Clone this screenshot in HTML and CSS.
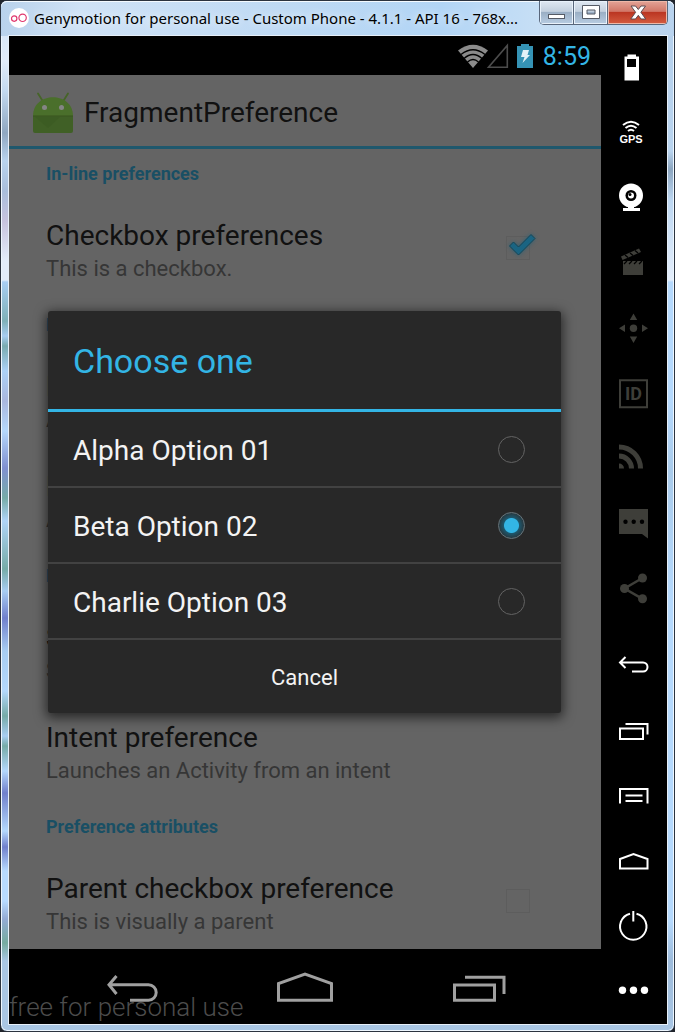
FILE: index.html
```html
<!DOCTYPE html>
<html lang="en">
<head>
<meta charset="utf-8">
<meta name="viewport" content="width=device-width, initial-scale=1">
<title>Genymotion for personal use</title>
<link rel="stylesheet" href="styles.css">
</head>
<body>
<div class="window">
  <header class="titlebar">
    <svg class="logo" viewBox="0 0 20 20" aria-hidden="true"><circle cx="10" cy="10" r="10" fill="#fff"/><g fill="none" stroke="#e0386e" stroke-width="1.2"><circle cx="5.2" cy="10.6" r="2.7"/><circle cx="13.6" cy="9.8" r="3.7"/></g></svg>
    <span class="window-title">Genymotion for personal use - Custom Phone - 4.1.1 - API 16 - 768x...</span>
    <div class="window-controls">
      <button class="win-btn" aria-label="Minimize"><svg viewBox="0 0 24 20"><rect x="3.5" y="11.5" width="16" height="4" fill="#fff" stroke="#555b66"/></svg></button>
      <button class="win-btn" aria-label="Maximize"><svg viewBox="0 0 24 20"><path d="M3.500 2.500h17v13h-17z M8 7v4h8V7z" fill="#fff" fill-rule="evenodd" stroke="#555b66"/></svg></button>
      <button class="win-btn close" aria-label="Close"><svg viewBox="0 0 24 20"><path d="M5 3h4.500l2.800 3.500L15 3h4.500l-4.600 6.300L19.700 16H15l-2.700-3.700L9.500 16H4.800l4.800-6.700z" fill="#fff" stroke="#5c4a50"/></svg></button>
    </div>
  </header>

  <div class="emulator">
    <main class="phone">
      <div class="status">
        <svg class="status-wifi" viewBox="0 0 52 26" aria-hidden="true">
          <path d="M1 7.500Q16 -4 31 7.500L16 25z" fill="#8b8b8b"/>
          <g fill="none" stroke="#000" stroke-width="1.300"><path d="M4 11.500Q16 2 28 11.500M7 15.500Q16 7.500 25 15.500M10.500 19Q16 14 21.500 19"/></g>
          <path d="M50.300 2.500V24.300H31.500z" fill="none" stroke="#4c4c4c" stroke-width="1.600"/>
        </svg>
        <svg class="status-battery" viewBox="0 0 16 26" aria-hidden="true"><path d="M4 1h8v2h4v22H0V3h4z" fill="#3593b5"/><path d="M6 7h6l-1.500 5H13l-7.500 8 2-6H4z" fill="#e3f1f7"/></svg>
        <time class="clock">8:59</time>
      </div>

      <section class="app">
        <div class="actionbar">
          <svg class="android" viewBox="0 0 42 44" aria-hidden="true">
            <path d="M6 2.500l5 8M36 2.500l-5 8" stroke="#466528" stroke-width="1.800" stroke-linecap="round"/>
            <path d="M1 25C1 0 41 0 41 25z" fill="#4a6f2b"/>
            <path d="M1 25h40v15q0 2-2 2H3q-2 0-2-2z" fill="#406026"/>
            <path d="M1 25h40" stroke="#38551f"/><path d="M3 26l13 11 12-11z" fill="#36521f" opacity=".3"/>
            <circle cx="12.500" cy="16.500" r="2.500" fill="#858585"/><circle cx="29.500" cy="16.500" r="2.500" fill="#858585"/>
          </svg>
          <h1 class="app-title">FragmentPreference</h1>
        </div>

        <div class="prefs">
          <h2 class="category">In-line preferences</h2>
          <label class="pref"><span class="pref-text"><span class="pref-title">Checkbox preferences</span><span class="pref-summary">This is a checkbox.</span></span>
            <span class="check"><input type="checkbox" checked><svg class="tick" viewBox="0 0 34 30" aria-hidden="true"><path d="M5.500 14l4-4 5 5L27 2.500l4 4L14.500 23z" fill="#1a6482" stroke="#174555"/></svg></span></label>
          <h2 class="category">Dialog-based preferences</h2>
          <div class="pref"><span class="pref-text"><span class="pref-title">Edit text preference</span><span class="pref-summary">An example that uses an edit text dialog</span></span></div>
          <div class="pref"><span class="pref-text"><span class="pref-title">List preference</span><span class="pref-summary">An example that uses a list dialog</span></span></div>
          <h2 class="category">Launch preferences</h2>
          <div class="pref"><span class="pref-text"><span class="pref-title">Screen preference</span><span class="pref-summary">Shows another screen of preferences</span></span></div>
          <div class="pref"><span class="pref-text"><span class="pref-title">Intent preference</span><span class="pref-summary">Launches an Activity from an intent</span></span></div>
          <h2 class="category">Preference attributes</h2>
          <label class="pref"><span class="pref-text"><span class="pref-title">Parent checkbox preference</span><span class="pref-summary">This is visually a parent</span></span>
            <span class="check"><input type="checkbox"></span></label>
        </div>

        <div class="overlay">
          <form class="dialog" role="dialog" aria-labelledby="dialog-title">
            <h2 class="dialog-title" id="dialog-title">Choose one</h2>
            <label class="option"><span>Alpha Option 01</span><input type="radio" name="option"></label>
            <label class="option"><span>Beta Option 02</span><input type="radio" name="option" checked></label>
            <label class="option"><span>Charlie Option 03</span><input type="radio" name="option"></label>
            <button class="cancel" type="button">Cancel</button>
          </form>
        </div>
      </section>

      <nav class="navbar">
        <button class="nav-btn" aria-label="Back"><svg viewBox="0 0 60 40"><path d="M14.500 9L7 17.800L14.500 27M7 17.800H46.500a7.700 7.700 0 0 1 0 15.400H28"/></svg></button>
        <button class="nav-btn" aria-label="Home"><svg viewBox="0 0 60 40"><path d="M3.500 33.200V16.500L30 7L56.500 16.500V33.200z"/></svg></button>
        <button class="nav-btn" aria-label="Recent apps"><svg viewBox="0 0 60 40"><path d="M6.500 18h40v15.200h-40zM17 10.200H56V27"/></svg></button>
        <span class="watermark">free for personal use</span>
      </nav>
    </main>

    <aside class="toolbar">
      <div class="tools widgets">
        <button class="tool" aria-label="Battery"><svg viewBox="0 0 40 40"><path d="M14.500 5.500h8.500v2h3V31.500H11.500V7.500h3z M14 10v8h9v-8z" fill="#fff" fill-rule="evenodd"/></svg></button>
        <button class="tool" aria-label="GPS"><svg viewBox="0 0 40 40"><g fill="none" stroke="#fff" stroke-width="2"><path d="M10 11Q18 4.500 26 11M12.500 14Q18 9.500 23.500 14M15 17Q18 14.500 21 17"/></g><text x="18" y="28.500" class="gps">GPS</text></svg></button>
        <button class="tool" aria-label="Camera"><svg viewBox="0 0 40 40"><circle cx="18" cy="16.500" r="12" fill="#fff"/><path d="M15 27h6v2h6v3H10v-3h5z" fill="#fff"/><circle cx="18" cy="16.500" r="5.500" fill="#000"/><circle cx="18" cy="16.500" r="3" fill="#fff"/><circle cx="17" cy="15.500" r="1.500" fill="#000"/></svg></button>
        <button class="tool off" aria-label="Screencast"><svg viewBox="0 0 40 40"><path d="M10 17h20v14H10z"/><path d="M8 12.500L26 4.500l2 3.500L9.500 16z"/><path d="M11 20l3-3M16 20l3-3M21 20l3-3M26 20l3-3M12 11l3 2.500M17 9l3 2.500M22 6.500l3 2.500" stroke="#000" stroke-width="1.300"/></svg></button>
        <button class="tool off" aria-label="Multi-touch"><svg viewBox="0 0 40 40"><circle cx="20.500" cy="19.300" r="3.700"/><path d="M20.500 4.500l3.700 6.500h-7.400zM20.500 34l3.700-6.500h-7.400zM6 19.300l6-3.700v7.400zM35 19.300l-6-3.700v7.400z"/></svg></button>
        <button class="tool off" aria-label="Identifiers"><svg viewBox="0 0 40 40"><path d="M7 5.200h27v27H7z" fill="none" stroke="#3e3e39" stroke-width="2"/><text x="20.500" y="25.300" class="ident">ID</text></svg></button>
        <button class="tool off" aria-label="Network"><svg viewBox="0 0 40 40"><path d="M6 23.500a5 5 0 0 1 5 5H6z"/><path d="M6 16a12.500 12.500 0 0 1 12.500 12.500M6 7a21.500 21.500 0 0 1 21.500 21.500" fill="none" stroke="#3e3e39" stroke-width="5"/></svg></button>
        <button class="tool off" aria-label="Phone messages"><svg viewBox="0 0 40 40"><path d="M6 4h29v29.500L29 29H6z"/><g fill="#000"><circle cx="12.500" cy="16.800" r="2.200"/><circle cx="20.700" cy="16.800" r="2.200"/><circle cx="29" cy="16.800" r="2.200"/></g></svg></button>
        <button class="tool off" aria-label="Share"><svg viewBox="0 0 40 40"><path d="M29.500 8L11.500 18.500L29.500 28.800" fill="none" stroke="#3e3e39" stroke-width="2.500"/><circle cx="11.500" cy="18.500" r="4.500"/><circle cx="29.500" cy="8" r="4.500"/><circle cx="29.500" cy="28.800" r="4.500"/></svg></button>
      </div>
      <div class="tools keys">
        <button class="tool line" aria-label="Device back"><svg viewBox="0 0 40 40"><path d="M12.500 12L7 17.500L12.500 23M7 17.500H30a4.500 4.500 0 0 1 0 9H19"/></svg></button>
        <button class="tool line" aria-label="Device recent apps"><svg viewBox="0 0 40 40"><path d="M7 17.500h23v10.500H7zM12.500 13H34.500V23.500"/></svg></button>
        <button class="tool line" aria-label="Device menu"><svg viewBox="0 0 40 40"><path d="M7 27.500V13H34.500V27.500M12.500 19.500H29.500M12.500 25H29.500"/></svg></button>
        <button class="tool line" aria-label="Device home"><svg viewBox="0 0 40 40"><path d="M7 27.500V18L20.500 13L34.500 18V27.500z"/></svg></button>
        <button class="tool line" aria-label="Power"><svg viewBox="0 0 40 40"><path d="M23.500 7.700a13.200 13.200 0 1 1-6.500 0M20.300 5V15.500"/></svg></button>
        <button class="tool" aria-label="More"><svg viewBox="0 0 40 40"><g fill="#fff"><circle cx="9.500" cy="19.200" r="3.700"/><circle cx="20.500" cy="19.200" r="3.700"/><circle cx="31.500" cy="19.200" r="3.700"/></g></svg></button>
      </div>
    </aside>
  </div>
</div>
</body>
</html>
```

FILE: styles.css
```css
* { box-sizing: border-box; }

body {
  margin: 0;
  background: #20242c;
  font-family: Roboto, "Liberation Sans", sans-serif;
}

button {
  margin: 0;
  padding: 0;
  border: 0;
  background: none;
  font: inherit;
}

h1, h2 { margin: 0; font-weight: 400; }
svg { display: block; }

/* Window frame */
.window {
  display: flex;
  flex-direction: column;
  height: 100vh;
  padding: 0 7px 7px 8px;
  border: 1px solid #2b333f;
  border-radius: 7px;
  box-shadow: inset 0 0 0 1px #eef7ff;
  background:
    linear-gradient(#cfe2f6 0, #e1ecfa 60px, #c3d9f0 90px, #8fa7c1 132px, #b9d3ee 160px, #a9bedb 190px, #c6c3de 220px, #e3edfa 260px, #e3edfa 279px, #a8cdf2 281px, #7fb0b8 320px, #a8cdf2 335px, #79aab0 345px, #acd1f6 370px, #a9b7de 400px, #b5d8fb 430px, #8090d0 467px, #76aba8 497px, #b0d4f8 520px, #76aba8 568px, #a8cdf2 590px, #7080cc 617px, #a8cdf2 650px, #b4d8fc 690px, #76aba8 715px, #a8cdf2 735px, #76aba8 745px, #b4d8fc 770px, #7080cc 792px, #b4d8fc 830px, #7080cc 846px, #b8dbff 870px, #b8dbff 900px, #94abd4 918px, #76aba0 942px, #a9c6e4 960px, #a9c6e4 100%) left / 8px 100% no-repeat,
    linear-gradient(#b5d0ec 0, #b9d4ef 150px, #8ca6c0 168px, #bdd7f2 200px, #e4eefb 279px, #b5d9fd 281px, #b5d9fd 400px, #a9cbeb 470px, #b5d9fd 600px, #b5d9fd 920px, #9dbbdb 960px, #a9c6e4 100%);
}

.titlebar {
  display: flex;
  flex: none;
  align-items: flex-start;
  gap: 5px;
  height: 35px;
  margin: 0 -7px 0 -8px;
  padding-left: 8px;
  border-radius: 6px 6px 0 0;
  background: linear-gradient(90deg, #b9d2ec, #cfe2f6 80px, #bfdaf4 280px, #b2d5f5 440px, #c7dff5 540px, #b9d3ee);
  box-shadow: inset 0 1px #f4faff;
}

.logo { flex: none; width: 20px; height: 20px; margin-top: 7px; }

.window-title {
  flex: 1;
  min-width: 0;
  overflow: hidden;
  white-space: nowrap;
  font: 15px/34px "Noto Sans", "Open Sans", sans-serif;
  color: #000;
  text-shadow: 0 0 8px #fff;
}

.window-controls {
  display: flex;
  flex: none;
  height: 24px;
  margin-right: 6px;
  border: 1px solid #59677b;
  border-top: 0;
  border-radius: 0 0 5px 5px;
  overflow: hidden;
}

.win-btn {
  display: grid;
  place-items: center;
  width: 34px;
  border-right: 1px solid #59677b;
  background: linear-gradient(#dfe8f2 0, #c3d0de 45%, #9bafc5 50%, #b8cde2);
  box-shadow: inset 0 0 0 1px #e9f2fb;
}
.win-btn svg { width: 24px; height: 20px; }
.win-btn.close {
  width: 59px;
  border-right: 0;
  background: linear-gradient(#e3a497 0, #d17768 45%, #bb3622 50%, #d45c40);
  box-shadow: inset 0 0 0 1px #eeb8a8;
}

.emulator {
  display: flex;
  flex: 1;
  min-height: 0;
  background: #000;
  box-shadow: 0 0 0 1px #e6eff9;
}

/* Device screen */
.phone {
  display: flex;
  flex: 1;
  flex-direction: column;
  min-width: 0;
}

.status {
  display: flex;
  flex: none;
  align-items: center;
  justify-content: flex-end;
  height: 39px;
  padding-right: 10px;
}
.status-wifi { width: 52px; height: 26px; }
.status-battery { width: 16px; height: 26px; margin: 0 10px 0 8px; }
.clock { padding-top: 2px; font-size: 25px; line-height: 36px; color: #33b5e5; }

.app {
  position: relative;
  flex: 1;
  min-height: 0;
  overflow: hidden;
  background: #646464;
}

.actionbar {
  display: flex;
  align-items: center;
  gap: 10px;
  height: 74px;
  padding: 4px 0 0 23px;
  border-bottom: 3px solid #1f586d;
}
.android { width: 42px; height: 44px; }
.app-title { font-size: 28px; line-height: 34px; color: #111; }

.prefs { padding: 0 37px; }

.category {
  height: 51px;
  font-size: 18px;
  font-weight: 700;
  line-height: 50px;
  color: #194f64;
}

.pref {
  display: flex;
  justify-content: space-between;
  height: 100px;
  padding: 19px 34px 15px 0;
}
.pref-text { display: flex; flex-direction: column; white-space: nowrap; }
.pref-title { font-size: 28px; line-height: 34px; color: #111; }
.pref-summary { font-size: 22px; line-height: 32px; color: #363636; }

.check { position: relative; width: 24px; height: 24px; margin-top: 17px; }
.check input {
  appearance: none;
  display: block;
  width: 24px;
  height: 24px;
  margin: 0;
  border: 1px solid #5d5d5d;
}
.tick {
  position: absolute;
  top: -4px;
  left: -2px;
  width: 34px;
  height: 30px;
  filter: drop-shadow(0 0 2px #2b6075);
}

/* Dialog */
.overlay {
  position: absolute;
  inset: 0;
  display: grid;
  align-items: center;
  padding: 0 40px 0 39px;
}

.dialog {
  border-radius: 3px;
  background: #282828;
  box-shadow: 0 3px 12px 2px rgba(0, 0, 0, 0.6);
  color: #f3f3f3;
}
.dialog-title {
  height: 101px;
  padding: 0 25px;
  border-bottom: 3px solid #33b5e5;
  font-size: 34px;
  line-height: 100px;
  color: #33b5e5;
}
.option {
  display: flex;
  align-items: center;
  justify-content: space-between;
  height: 76px;
  padding: 0 36px 0 25px;
  border-bottom: 2px solid #424242;
  font-size: 28px;
}
.option span { padding-top: 2px; }
.option input {
  appearance: none;
  width: 27px;
  height: 27px;
  margin: 0;
  border: 1px solid #636363;
  border-radius: 50%;
}
.option input:checked {
  border-color: #66747a;
  background: radial-gradient(circle, #33b5e5 0, #33b5e5 7px, #1d566b 8px, #263c45 12px);
}
.cancel {
  display: block;
  width: 100%;
  height: 73px;
  padding-top: 2px;
  font-size: 22px;
  color: #f3f3f3;
}

/* Navigation keys */
.navbar {
  position: relative;
  display: flex;
  flex: none;
  justify-content: center;
  height: 75px;
}
.nav-btn { display: grid; flex: 0 1 173px; place-items: center; }
.nav-btn svg { width: 60px; height: 40px; fill: none; stroke: #a0a0a0; stroke-width: 3; }
.watermark {
  position: absolute;
  bottom: 0;
  left: 0;
  font-size: 26px;
  font-weight: 300;
  line-height: 34px;
  color: #4c4c4c;
}

/* Emulator toolbar */
.toolbar {
  display: flex;
  flex: none;
  flex-direction: column;
  gap: 10px;
  width: 66px;
  padding-right: 2px;
}
.tools { display: grid; grid-auto-rows: 1fr; }
.widgets { flex: 9; }
.keys { flex: 6; }
.tool { display: grid; place-items: center; }
.tool svg { width: 40px; height: 40px; }
.off svg { fill: #3e3e39; }
.line svg { fill: none; stroke: #fff; stroke-width: 2; }
.gps { font: bold 11px "Liberation Sans", sans-serif; fill: #fff; text-anchor: middle; }
.ident { font: bold 18px Roboto, sans-serif; text-anchor: middle; }
```
